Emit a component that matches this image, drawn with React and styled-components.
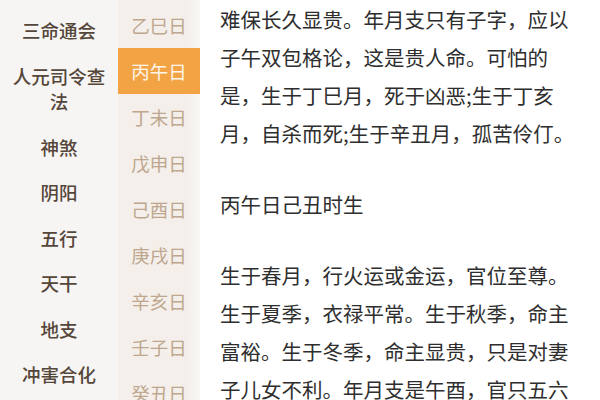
import styled, { createGlobalStyle } from "styled-components";

const GlobalStyle = createGlobalStyle`
    html, body {
        margin: 0;
        padding: 0;
        background: #ffffff;
    }

    body {
        font-family: "Noto Sans CJK SC", "Noto Sans", sans-serif;
    }
`;

const Page = styled.div`
    display: flex;
    width: 600px;
    height: 400px;
    overflow: hidden;
`;

const CategoryList = styled.ul`
    list-style: none;
    margin: 0;
    padding: 8px 0 0;
    width: 118px;
    flex-shrink: 0;
    background: #f6f5f3;
`;

const CategoryItem = styled.li`
    padding: 10px 10px;
    font-size: 18.5px;
    font-weight: 500;
    line-height: 25.5px;
    color: #55463a;
    text-align: center;
`;

const DayList = styled.ul`
    list-style: none;
    margin: 0;
    padding: 2px 0 0;
    width: 82px;
    flex-shrink: 0;
    background: linear-gradient(to right, #f4efea 84%, #f9f7f4);
`;

const DayItem = styled.li`
    height: 46px;
    display: flex;
    align-items: center;
    justify-content: center;
    font-size: 18.5px;
    color: ${(p) => (p.$active ? "#fdf4e8" : "#bea78e")};
    background: ${(p) => (p.$active ? "#f2a445" : "transparent")};
`;

const Article = styled.div`
    flex: 1;
    padding: 0 22px 0 20px;
    width: 358px;
`;

const Paragraph = styled.p`
    margin: 0 0 33px;
    font-size: 20.5px;
    line-height: 38px;
    color: #2e2e2e;
`;

const categories = ["三命通会", "人元司令查法", "神煞", "阴阳", "五行", "天干", "地支", "冲害合化"];

const days = ["乙巳日", "丙午日", "丁未日", "戊申日", "己酉日", "庚戌日", "辛亥日", "壬子日", "癸丑日"];

export default function App() {
    return (
        <>
            <GlobalStyle />
            <Page>
                <CategoryList>
                    {categories.map((c) => (
                        <CategoryItem key={c}>{c}</CategoryItem>
                    ))}
                </CategoryList>
                <DayList>
                    {days.map((d) => (
                        <DayItem key={d} $active={d === "丙午日"}>
                            {d}
                        </DayItem>
                    ))}
                </DayList>
                <Article>
                    <Paragraph>
                        难保长久显贵。年月支只有子字，应以子午双包格论，这是贵人命。可怕的是，生于丁巳月，死于凶恶;生于丁亥月，自杀而死;生于辛丑月，孤苦伶仃。
                    </Paragraph>
                    <Paragraph>丙午日己丑时生</Paragraph>
                    <Paragraph>
                        生于春月，行火运或金运，官位至尊。生于夏季，衣禄平常。生于秋季，命主富裕。生于冬季，命主显贵，只是对妻子儿女不利。年月支是午酉，官只五六品。
                    </Paragraph>
                </Article>
            </Page>
        </>
    );
}
